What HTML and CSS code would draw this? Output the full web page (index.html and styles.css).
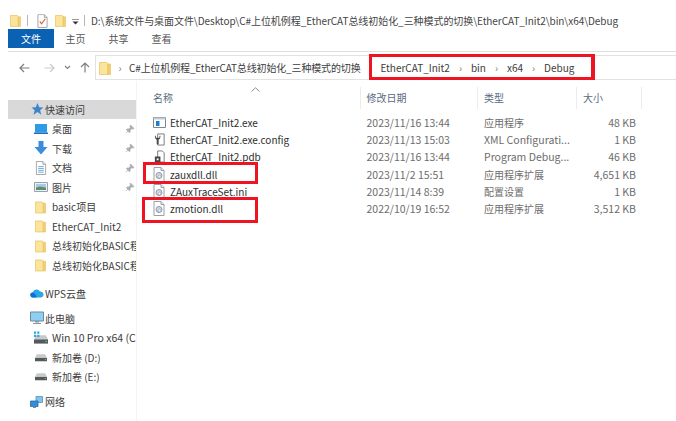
FILE: index.html
```html
<!DOCTYPE html>
<html lang="zh">
<head>
<meta charset="utf-8">
<title>Debug</title>
<link rel="stylesheet" href="styles.css">
</head>
<body>
<svg class="defs" width="0" height="0">
  <defs>
    <symbol id="folder" viewBox="0 0 12 14">
      <path d="M.5 1.500h7.500l1 1v11h-8.500z" fill="#fbe49c" stroke="#e8c565" stroke-width=".8"/>
      <path d="M9 3h2.500v10.500H9z" fill="#f4cf73" stroke="#e3bb58" stroke-width=".6"/>
    </symbol>
    <symbol id="page" viewBox="0 0 12 15">
      <path d="M1 .5h7l3 3v11H1z" fill="#fff" stroke="#9aa0a6"/>
      <path d="M8 .5v3h3" fill="#e6e8ea" stroke="#9aa0a6"/>
    </symbol>
    <symbol id="gear-page" viewBox="0 0 12 15">
      <use href="#page"/>
      <circle cx="6" cy="8.500" r="3" fill="#d5dbe2" stroke="#8c9aa8"/>
      <circle cx="6.500" cy="9.500" r="1.500" fill="#eef1f4" stroke="#8c9aa8" stroke-width=".6"/>
    </symbol>
    <symbol id="pin" viewBox="0 0 10 10">
      <path d="M5.500 1l3.500 3.500-1 .6-1.200-.4-1.800 1.800.2 1.500-.8.700-3-3 .7-.8 1.500.2 1.800-1.800-.4-1.200zM3 7l-2 2" fill="#a7adb3" stroke="#a7adb3" stroke-width=".7"/>
    </symbol>
    <symbol id="drive" viewBox="0 0 13 9">
      <path d="M2 1h9l2 4v3.500H0V5z" fill="#c7c9cb"/>
      <path d="M0 5h13v3.500H0z" fill="#55595c"/>
      <path d="M10.500 6.300h1.500v1h-1.500z" fill="#62d162"/>
    </symbol>
  </defs>
</svg>

<div class="window">
  <header class="titlebar">
    <svg class="ti ti-folder"><use href="#folder"/></svg>
    <span class="tsep"></span>
    <svg class="ti ti-check" viewBox="0 0 12 15">
      <use href="#page"/>
      <path d="M3 8l2 2.500L9 5" fill="none" stroke="#e4572e" stroke-width="1.200"/>
    </svg>
    <svg class="ti ti-folder2"><use href="#folder"/></svg>
    <svg class="ti-caret" viewBox="0 0 7 6"><path d="M0 0h7" stroke="#333" fill="none"/><path d="M.5 2.500h6L3.500 5.500z" fill="#333"/></svg>
    <span class="tsep tsep2"></span>
    <span class="path">D:\系统文件与桌面文件\Desktop\C#上位机例程_EtherCAT总线初始化_三种模式的切换\EtherCAT_Init2\bin\x64\Debug</span>
  </header>

  <nav class="ribbon">
    <span class="tab tab-file">文件</span>
    <span class="tab">主页</span>
    <span class="tab">共享</span>
    <span class="tab">查看</span>
  </nav>

  <div class="addressrow">
    <svg class="nav nav-back" viewBox="0 0 11 10"><path d="M10.500 5H1M5 1L1 5l4 4" fill="none" stroke="#7b7f83" stroke-width="1.200"/></svg>
    <svg class="nav nav-fwd" viewBox="0 0 11 10"><path d="M.5 5H10M6 1l4 4-4 4" fill="none" stroke="#c9cbcd" stroke-width="1.200"/></svg>
    <svg class="nav nav-down" viewBox="0 0 7 5"><path d="M1 1l2.500 2.500L6 1" fill="none" stroke="#7b7f83" stroke-width="1.100"/></svg>
    <svg class="nav nav-up" viewBox="0 0 10 11"><path d="M5 10.500V1M1 5l4-4 4 4" fill="none" stroke="#7b7f83" stroke-width="1.200"/></svg>
    <div class="addressbox">
      <svg class="addr-folder"><use href="#folder"/></svg>
      <span class="crumb-sep first">›</span>
      <span class="crumb c-long">C#上位机例程_EtherCAT总线初始化_三种模式的切换</span>
      <span class="crumb">EtherCAT_Init2</span>
      <span class="crumb-sep">›</span>
      <span class="crumb">bin</span>
      <span class="crumb-sep">›</span>
      <span class="crumb">x64</span>
      <span class="crumb-sep">›</span>
      <span class="crumb">Debug</span>
      <span class="redbox red-address"></span>
    </div>
  </div>

  <div class="content">
    <aside class="sidebar">
      <div class="side-row lvl0 selected">
        <svg class="si" viewBox="0 0 14 14"><path d="M7.500 1l1.700 4.300 4.300.2-3.400 2.700 1.200 4.500L7.500 10l-4 2.700 1.200-4.500L1.500 5.500l4.300-.2z" fill="#3d86c6"/></svg>
        快速访问
      </div>
      <div class="side-row lvl1">
        <svg class="si" viewBox="0 0 14 12"><path d="M1 1h12v8.500H1z" fill="#2f9be8"/><path d="M0 9.500h14V11H0z" fill="#1d6fb8"/></svg>
        <span class="side-label">桌面</span><svg class="pin"><use href="#pin"/></svg>
      </div>
      <div class="side-row lvl1">
        <svg class="si" viewBox="0 0 14 14"><path d="M4.500 0h5v6h4L7 13.500.5 6h4z" fill="#3b8ddb"/></svg>
        <span class="side-label">下载</span><svg class="pin"><use href="#pin"/></svg>
      </div>
      <div class="side-row lvl1">
        <svg class="si" viewBox="0 0 12 15"><use href="#page"/><path d="M3 6h6M3 8h6M3 10h6M3 12h6" stroke="#6ba6d4"/></svg>
        <span class="side-label">文档</span><svg class="pin"><use href="#pin"/></svg>
      </div>
      <div class="side-row lvl1">
        <svg class="si" viewBox="0 0 14 11"><path d="M.5 1h13v9H.500z" fill="#eef1f3" stroke="#9aa3ab"/><path d="M2 2.500h10V6H2z" fill="#a9c9e6"/><path d="M2 6l4-1 6 1v2.500H2z" fill="#5c8f6d"/></svg>
        <span class="side-label">图片</span><svg class="pin"><use href="#pin"/></svg>
      </div>
      <div class="side-row lvl1"><svg class="si si-f"><use href="#folder"/></svg><span class="side-label">basic项目</span></div>
      <div class="side-row lvl1"><svg class="si si-f"><use href="#folder"/></svg><span class="side-label">EtherCAT_Init2</span></div>
      <div class="side-row lvl1"><svg class="si si-f"><use href="#folder"/></svg><span class="side-label">总线初始化BASIC程</span></div>
      <div class="side-row lvl1"><svg class="si si-f"><use href="#folder"/></svg><span class="side-label">总线初始化BASIC程</span></div>

      <div class="side-row lvl0 group group-wps">
        <svg class="si" viewBox="0 0 14 10"><path d="M3 9.500a2.500 2.500 0 0 1-.3-5A4 4 0 0 1 10 3.500a3 3 0 0 1 .9 6z" fill="#25a7e8"/><path d="M3 9.500a2.500 2.500 0 0 1-.3-5c1.500 0 3 1.500 4 5z" fill="#0f6fd6"/></svg>
        WPS云盘
      </div>
      <div class="side-row lvl0 group">
        <svg class="si" viewBox="0 0 14 13"><path d="M.5 .5h13v9H.5z" fill="#8fd0f2" stroke="#6a8aa3"/><path d="M5 9.500h4V11H5zM3 11.500h8v1H3z" fill="#8a97a3"/></svg>
        此电脑
      </div>
      <div class="side-row lvl1">
        <svg class="si" viewBox="0 0 13 12"><use href="#drive" y="2" height="10" width="13"/><path d="M0 0h2v2H0zM3 0h2v2H3zM0 3h2v2H0zM3 3h2v2H3z" fill="#2aa8e0"/></svg>
        <span class="side-label wide">Win 10 Pro x64 (C</span>
      </div>
      <div class="side-row lvl1"><svg class="si si-d"><use href="#drive"/></svg><span class="side-label">新加卷 (D:)</span></div>
      <div class="side-row lvl1"><svg class="si si-d"><use href="#drive"/></svg><span class="side-label">新加卷 (E:)</span></div>
      <div class="side-row lvl0 group">
        <svg class="si" viewBox="0 0 14 13"><path d="M6 1h6.500v6H6z" fill="#7ec5ee" stroke="#5c8fb3" stroke-width=".8"/><path d="M.5 5.500H8v5.500H.5z" fill="#2f8fdd" stroke="#2a6d9f" stroke-width=".8"/><path d="M3 11h3v1.500H3z" fill="#7d8b96"/></svg>
        网络
      </div>
    </aside>

    <main class="files">
      <div class="sort-caret"><svg viewBox="0 0 9 5"><path d="M.5 4.500L4.500 .8l4 3.700" fill="none" stroke="#8b8f93"/></svg></div>
      <div class="thead frow">
        <span class="th c-name">名称</span>
        <span class="th c-date">修改日期</span>
        <span class="th c-type">类型</span>
        <span class="th c-size">大小</span>
      </div>
      <div class="frow row first-row">
        <span class="c-name"><svg class="fi" viewBox="0 0 13 11"><path d="M.5 .5h12v10H.5z" fill="#fff" stroke="#7d8790"/><path d="M.5 .5h12v2H.5z" fill="#c4ccd3"/><path d="M3 4h3.500v5H3z" fill="#1b7fd6"/></svg><span class="strong">EtherCAT_Init2.exe</span></span>
        <span class="c-date">2023/11/16 13:44</span><span class="c-type">应用程序</span><span class="c-size">48 KB</span>
      </div>
      <div class="frow row">
        <span class="c-name"><svg class="fi" viewBox="0 0 12 14"><path d="M4 1h7v12H4z" fill="#fff" stroke="#777"/><path d="M1 3c0 3 1 4 2 4v5h2V7c1 0 2-1 2-4H6v2H2V3z" fill="#444"/></svg><span class="strong">EtherCAT_Init2.exe.config</span></span>
        <span class="c-date">2023/11/13 15:03</span><span class="c-type wide">XML Configurati...</span><span class="c-size">1 KB</span>
      </div>
      <div class="frow row">
        <span class="c-name"><svg class="fi" viewBox="0 0 12 14"><path d="M4 1h5l2 2v10H4z" fill="#fff" stroke="#777"/><path d="M1 7h6v6H1z" fill="#444"/><path d="M3 9h2v2H3z" fill="#fff"/></svg><span class="strong">EtherCAT_Init2.pdb</span></span>
        <span class="c-date">2023/11/16 13:44</span><span class="c-type wide">Program Debug...</span><span class="c-size">46 KB</span>
      </div>
      <div class="frow row">
        <span class="c-name"><svg class="fi fi-page"><use href="#gear-page"/></svg><span class="strong">zauxdll.dll</span></span>
        <span class="c-date">2023/11/2 15:51</span><span class="c-type">应用程序扩展</span><span class="c-size">4,651 KB</span>
      </div>
      <div class="frow row">
        <span class="c-name"><svg class="fi fi-page"><use href="#gear-page"/></svg><span class="strong">ZAuxTraceSet.ini</span></span>
        <span class="c-date">2023/11/14 8:39</span><span class="c-type">配置设置</span><span class="c-size">1 KB</span>
      </div>
      <div class="frow row">
        <span class="c-name"><svg class="fi fi-page"><use href="#gear-page"/></svg><span class="strong">zmotion.dll</span></span>
        <span class="c-date">2022/10/19 16:52</span><span class="c-type">应用程序扩展</span><span class="c-size">3,512 KB</span>
      </div>
      <span class="redbox red-zaux"></span>
      <span class="redbox red-zmotion"></span>
    </main>
  </div>
</div>
</body>
</html>
```

FILE: styles.css
```css
* { box-sizing: border-box; }
html, body { margin: 0; padding: 0; background: #fff; }
body {
  width: 676px;
  height: 421px;
  overflow: hidden;
  font-family: "Noto Sans CJK SC", "Open Sans", "Liberation Sans", sans-serif;
  font-size: 10px;
  color: #3c3c3c;
}
.defs { position: absolute; }
svg { display: block; flex: none; }
.window { display: flex; flex-direction: column; height: 421px; }

/* title bar */
.titlebar { display: flex; align-items: center; height: 29px; padding: 12px 0 0 10px; }
.ti-folder, .ti-folder2 { width: 11px; height: 13px; }
.ti-check { width: 11px; height: 14px; margin-left: 9px; }
.ti-folder2 { margin-left: 7px; }
.ti-caret { width: 7px; height: 6px; margin-left: 6px; margin-top: 2px; }
.tsep { width: 1px; height: 11px; background: #b5b5b5; margin-left: 5px; }
.ti-folder + .tsep { margin-left: 6px; }
.path { margin-left: 6px; white-space: nowrap; line-height: 14px; color: #444; letter-spacing: -0.06px; }

/* ribbon */
.ribbon {
  display: flex;
  align-items: center;
  height: 23px;
  margin-left: 8px;
  padding-bottom: 3px;
  border-bottom: 1px solid #dfdfdf;
}
.tab { width: 43px; text-align: center; color: #555; line-height: 19px; }
.tab-file { width: 46px; height: 19px; background: #0b62b3; color: #fff; }

/* address row */
.addressrow { display: flex; align-items: center; height: 29px; padding: 3px 0 1px; }
.nav-back { width: 11px; height: 10px; margin-left: 19px; }
.nav-fwd { width: 11px; height: 10px; margin-left: 14px; }
.nav-down { width: 7px; height: 5px; margin-left: 9px; }
.nav-up { width: 10px; height: 11px; margin-left: 9px; }
.addressbox {
  position: relative;
  display: flex;
  align-items: center;
  flex: 1;
  height: 25px;
  margin-left: 5px;
  padding-left: 3px;
  border: 1px solid #e2e2e2;
  border-right: 0;
  white-space: nowrap;
}
.addr-folder { width: 12px; height: 14px; }
.crumb { color: #3c3c3c; }
.crumb-sep { width: 21px; text-align: center; color: #777; }
.crumb-sep.first { width: 18px; }
.c-long { margin-right: 20px; letter-spacing: -0.15px; }

/* red annotation boxes */
.redbox { position: absolute; border: 3.500px solid #ee1421; }
.red-address { left: 273px; top: -2px; width: 226px; height: 26px; border-right-width: 4px; }
.red-zaux { left: 6px; top: 81px; width: 115px; height: 22px; }
.red-zmotion { left: 5px; top: 116px; width: 116px; height: 26px; }

/* content */
.content { display: flex; flex: 1; min-height: 0; }
.sidebar { width: 137px; padding: 18.500px 0 0 8px; border-right: 1px solid #f3f3f3; }
.side-row { display: flex; align-items: center; height: 19.500px; white-space: nowrap; overflow: hidden; }
.lvl0 { padding-left: 22px; }
.lvl1 { padding-left: 26px; }
.selected { background: #d9d9d9; }
.group { margin-top: 5.500px; }
.group-wps { margin-top: 8.500px; }
.side-row .si { width: 14px; height: 14px; margin-right: 1px; }
.lvl1 .si { margin-right: 4px; }
.side-row .si-f { width: 11px; height: 14px; margin: 0 6px 0 1px; }
.side-row .si-d { width: 12px; height: 9px; margin: 0 5px 0 1px; }
.side-label { flex: 1; min-width: 0; overflow: hidden; }
.pin { width: 10px; height: 10px; margin-right: 1px; }

/* file list */
.files { position: relative; flex: 1; padding-left: 16px; }
.sort-caret { position: absolute; left: 114px; top: 6px; width: 9px; }
.frow { display: grid; grid-template-columns: 208px 117px 99px 65px; align-items: center; }
.thead { height: 22px; margin-top: 6px; }
.th { color: #5a6b80; border-right: 1px solid #ececec; height: 22px; line-height: 22px; }
.c-date, .c-type { padding-left: 5.500px; color: #6d6d6d; }
.c-date, .c-size, .wide { font-size: 10.500px; }
.th.c-date, .th.c-type, .th.c-size { font-size: 10px; color: #5a6b80; }
.c-type { padding-left: 6px; }
.c-name { display: flex; align-items: center; }
.c-size { text-align: right; color: #6d6d6d; padding-right: 6px; }
.th.c-size { text-align: left; padding-left: 6px; }
.row { height: 17.200px; }
.first-row { margin-top: 5px; }
.fi { width: 13px; height: 13px; margin-right: 4px; }
.fi-page { width: 12px; height: 15px; margin-right: 5px; margin-left: 0; }
.strong { color: #2e2e2e; }
```
